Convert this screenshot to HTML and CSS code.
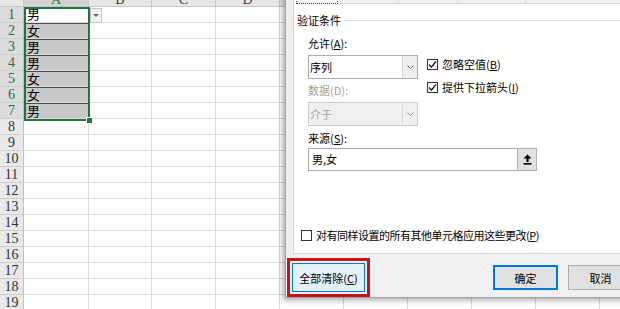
FILE: index.html
```html
<!DOCTYPE html>
<html lang="zh-CN">
<head>
<meta charset="utf-8">
<title>数据验证</title>
<link rel="stylesheet" href="styles.css">
</head>
<body>
<div class="screen">
  <div class="sheet">
    <div class="corner"></div><div class="ch on"><span>A</span></div><div class="ch"><span>B</span></div><div class="ch"><span>C</span></div><div class="ch"><span>D</span></div><div class="ch"></div><div class="ch"></div><div class="ch"></div><div class="ch"></div><div class="ch"></div><div class="ch"></div>
    <div class="rh on">1</div><div class="a">男</div><div></div><div></div><div></div><div></div><div></div><div></div><div></div><div></div><div></div>
    <div class="rh on">2</div><div class="a s">女</div><div></div><div></div><div></div><div></div><div></div><div></div><div></div><div></div><div></div>
    <div class="rh on">3</div><div class="a s">男</div><div></div><div></div><div></div><div></div><div></div><div></div><div></div><div></div><div></div>
    <div class="rh on">4</div><div class="a s">男</div><div></div><div></div><div></div><div></div><div></div><div></div><div></div><div></div><div></div>
    <div class="rh on">5</div><div class="a s">女</div><div></div><div></div><div></div><div></div><div></div><div></div><div></div><div></div><div></div>
    <div class="rh on">6</div><div class="a s">女</div><div></div><div></div><div></div><div></div><div></div><div></div><div></div><div></div><div></div>
    <div class="rh on">7</div><div class="a s">男</div><div></div><div></div><div></div><div></div><div></div><div></div><div></div><div></div><div></div>
    <div class="rh">8</div><div></div><div></div><div></div><div></div><div></div><div></div><div></div><div></div><div></div><div></div>
    <div class="rh">9</div><div></div><div></div><div></div><div></div><div></div><div></div><div></div><div></div><div></div><div></div>
    <div class="rh">10</div><div></div><div></div><div></div><div></div><div></div><div></div><div></div><div></div><div></div><div></div>
    <div class="rh">11</div><div></div><div></div><div></div><div></div><div></div><div></div><div></div><div></div><div></div><div></div>
    <div class="rh">12</div><div></div><div></div><div></div><div></div><div></div><div></div><div></div><div></div><div></div><div></div>
    <div class="rh">13</div><div></div><div></div><div></div><div></div><div></div><div></div><div></div><div></div><div></div><div></div>
    <div class="rh">14</div><div></div><div></div><div></div><div></div><div></div><div></div><div></div><div></div><div></div><div></div>
    <div class="rh">15</div><div></div><div></div><div></div><div></div><div></div><div></div><div></div><div></div><div></div><div></div>
    <div class="rh">16</div><div></div><div></div><div></div><div></div><div></div><div></div><div></div><div></div><div></div><div></div>
    <div class="rh">17</div><div></div><div></div><div></div><div></div><div></div><div></div><div></div><div></div><div></div><div></div>
    <div class="rh">18</div><div></div><div></div><div></div><div></div><div></div><div></div><div></div><div></div><div></div><div></div>
    <div class="rh">19</div><div></div><div></div><div></div><div></div><div></div><div></div><div></div><div></div><div></div><div></div>
  </div>

  <div class="selection"><span class="handle"></span></div>
  <div class="ddbtn"><svg width="6" height="3" viewBox="0 0 6 3"><path d="M0 0H6L3 3Z" fill="#666"/></svg></div>

  <div class="dialog">
    <div class="tabs">
      <div class="tab on"><span></span></div>
      <div class="tab w2"></div>
      <div class="tab w3"></div>
      <div class="tab w4"></div>
    </div>
    <div class="panel">
      <div class="gtitle"><span>验证条件</span><i class="gline"></i></div>
      <div class="cond">
        <div class="cleft">
          <div class="lbl">允许(<u>A</u>):</div>
          <div class="select"><span class="val">序列</span><span class="arrow"><svg width="7" height="4" viewBox="0 0 7 4"><polyline points="0.5,0.5 3.5,3.5 6.5,0.5" fill="none" stroke="#606060"/></svg></span></div>
          <div class="lbl dis gap4">数据(D):</div>
          <div class="select dis"><span class="val">介于</span><span class="arrow"><svg width="7" height="4" viewBox="0 0 7 4"><polyline points="0.5,0.5 3.5,3.5 6.5,0.5" fill="none" stroke="#9a9a9a"/></svg></span></div>
        </div>
        <div class="cright">
          <div class="chk"><span class="box"><svg width="9" height="9" viewBox="0 0 9 9"><polyline points="1,4.5 3.5,7 8,1.5" fill="none" stroke="#111" stroke-width="1.2"/></svg></span>忽略空值(<u>B</u>)</div>
          <div class="chk"><span class="box"><svg width="9" height="9" viewBox="0 0 9 9"><polyline points="1,4.5 3.5,7 8,1.5" fill="none" stroke="#111" stroke-width="1.2"/></svg></span>提供下拉箭头(<u>I</u>)</div>
        </div>
      </div>
      <div class="lbl src-lbl">来源(<u>S</u>):</div>
      <div class="source"><span class="val">男,女</span><span class="ref"><svg width="9" height="11" viewBox="0 0 9 11"><path d="M4.5 0.5L8.5 4.5H5.6V8H3.4V4.5H0.5Z" fill="#000"/><rect x="0.5" y="9" width="8" height="1.6" fill="#000"/></svg></span></div>
      <div class="chk apply"><span class="box"></span><span class="tight">对有同样设置的所有其他单元格应用这些更改(<u>P</u>)</span></div>
    </div>
    <div class="footer">
      <div class="hl"><button class="btn clear">全部清除(<u>C</u>)</button></div>
      <div class="actions"><button class="btn def">确定</button><button class="btn">取消</button></div>
    </div>
  </div>
</div>
</body>
</html>
```
FILE: styles.css
```css
* { box-sizing: border-box; margin: 0; padding: 0; }
html, body { width: 620px; height: 309px; overflow: hidden; background: #fff; }
body { font-family: "Noto Sans CJK SC", "Liberation Sans", sans-serif; }

.screen { position: relative; width: 620px; height: 309px; overflow: hidden; }

/* spreadsheet */
.sheet {
  display: grid;
  grid-template-columns: 24px 65px 63px repeat(8, 64px);
  grid-template-rows: 7px repeat(19, 16px);
}
.sheet > div { border-right: 1px solid #dadada; border-bottom: 1px solid #dadada; }
.corner { background: #e6e6e6; border-right-color: #c6c6c6 !important; border-bottom-color: #c6c6c6 !important; }
.ch {
  background: #e6e6e6;
  border-right-color: #c6c6c6 !important;
  border-bottom-color: #c6c6c6 !important;
  display: flex; align-items: flex-end; justify-content: center; overflow: hidden;
  font: 14px/12px "Liberation Serif", serif; color: #444;
}
.ch.on { background: #d2d2d2; color: #217346; }
.rh {
  background: #e9e9e9;
  border-right-color: #c0c0c0 !important;
  border-bottom-color: #d0d0d0 !important;
  font: 14px/15px "Liberation Serif", serif; color: #333; text-align: center;
}
.rh.on { background: #dcdcdc; color: #217346; }
.a {
  font-size: 13px; line-height: 14px; padding-left: 3px; color: #000;
  font-family: "Noto Sans CJK SC", sans-serif; overflow: hidden;
}
.a.s { background: #c8c8c8; border-top: 1px solid #4d4d4d; line-height: 13px; }

.selection {
  position: absolute; left: 24px; top: 7px; width: 66px; height: 114px;
  border: 2px solid #217346;
}
.handle {
  position: absolute; right: -5px; bottom: -5px; width: 7px; height: 7px;
  background: #217346; border: 1px solid #fff;
}
.ddbtn {
  position: absolute; left: 90px; top: 8px; width: 12px; height: 15px;
  background: #f3f3f3; border: 1px solid #c3c3c3;
  display: flex; align-items: center; justify-content: center;
}

/* dialog */
.dialog {
  position: absolute; left: 285px; top: -26px; width: 400px;
  background: #f0f0f0; border: 1px solid #a0a0a0;
  box-shadow: -2px 2px 6px rgba(0, 0, 0, .35);
  padding: 7px 0 0 7px;
  font-size: 11px; color: #000;
  display: flex; flex-direction: column;
}
.tabs { display: flex; height: 21px; position: relative; z-index: 1; }
.tab {
  height: 19px; margin-top: 2px;
  background: #f0f0f0; border: 1px solid #d9d9d9; border-bottom: none; margin-right: -1px;
}
.tab.on {
  width: 48px; height: 23px; margin-top: 0; background: #fff;
  display: flex; align-items: flex-end; padding: 0 2px;
}
.tab.on span { display: block; width: 100%; height: 12px; border: 1px dotted #333; margin-bottom: 1px; }
.tab.w2 { width: 59px; }
.tab.w3 { width: 60px; }
.tab.w4 { width: 69px; }

.panel {
  background: #fff; border: 1px solid #d9d9d9;
  padding: 9px 0 11px 3px;
}
.gtitle { display: flex; align-items: center; line-height: 14px; }
.gline { flex: 1; border-top: 1px solid #dcdcdc; margin: 1px 0 0 4px; }
.lbl { line-height: 14px; }
.lbl.dis { color: #a0a0a0; }
.cond { display: flex; margin: 9px 0 0 11px; }
.cleft { width: 110px; display: flex; flex-direction: column; }
.gap4 { margin-top: 4px; }
.select {
  display: flex; width: 110px; height: 24px; margin-top: 5px;
  background: #fff; border: 1px solid #adadad;
}
.select .val { flex: 1; padding-left: 1px; line-height: 22px; }
.select .arrow {
  width: 15px; background: #efefef; border-left: 1px solid #d6d6d6;
  display: flex; align-items: center; justify-content: center;
}
.select.dis { background: #f0f0f0; border-color: #cccccc; color: #a0a0a0; }
.select.dis .arrow { background: #f0f0f0; border-left-color: #dcdcdc; }
.cright { display: flex; flex-direction: column; gap: 9px; margin-left: 9px; padding-top: 21px; }
.chk { display: flex; align-items: center; line-height: 14px; white-space: nowrap; }
.box {
  width: 11px; height: 11px; border: 1px solid #333; background: #fff; margin-right: 4px;
  display: flex; align-items: center; justify-content: center;
}
.src-lbl { margin: 5px 0 0 11px; }
.source {
  display: flex; width: 229px; height: 23px; margin: 3px 0 0 11px;
  background: #fff; border: 1px solid #adadad;
}
.source .val { flex: 1; padding-left: 3px; line-height: 21px; }
.source .ref {
  width: 19px; background: #e1e1e1; border-left: 1px solid #adadad;
  display: flex; align-items: center; justify-content: center;
}
.apply { margin: 57px 0 0 4px; }
.tight { letter-spacing: -0.5px; }

.footer { display: flex; align-items: center; margin: 4px 0 0 -6px; }
.hl { border: 3px solid #c4151c; padding: 2px; }
.btn {
  font: inherit; color: #000; width: 65px; height: 25px;
  background: #e1e1e1; border: 1px solid #adadad;
  display: flex; align-items: center; justify-content: center;
}
.btn.clear { width: 73px; height: 29px; background: #e5f1fb; border-color: #0078d7; }
.btn.def { border: 2px solid #0078d7; }
.actions { display: flex; gap: 10px; margin-left: 123px; }
```
